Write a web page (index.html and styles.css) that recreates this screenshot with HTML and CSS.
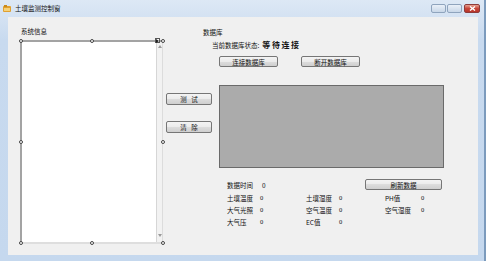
FILE: index.html
```html
<!DOCTYPE html>
<html lang="zh-CN">

<head>
    <meta charset="UTF-8">
    <title>土壤监测控制窗</title>
    <link rel="stylesheet" href="styles.css">
</head>

<body>
    <div class="window">
        <div class="titlebar">
            <svg class="app-icon" width="8" height="7" viewBox="0 0 8 7">
                <rect x="0" y="1" width="8" height="6" rx="1" fill="#e0a030"/>
                <rect x="1" y="0" width="3" height="2" fill="#c98a1c"/>
                <rect x="1" y="3" width="6" height="3" fill="#f5d27a"/>
            </svg>
            <span class="title">土壤监测控制窗</span>
            <div class="caption-buttons">
                <span class="cap-btn cap-min"></span>
                <span class="cap-btn cap-max"></span>
                <span class="cap-btn cap-close">
                    <svg width="7" height="5" viewBox="0 0 7 5"><path d="M1 0.5 L6 4.5 M6 0.5 L1 4.5" stroke="#fff" stroke-width="1.4"/></svg>
                </span>
            </div>
        </div>
        <div class="frame-body">
            <div class="client">
                <!-- 系统信息 -->
                <div class="col-info">
                    <div class="group-label">系统信息</div>
                    <div class="textbox">
                        <div class="scrollbar">
                            <svg width="4" height="3" viewBox="0 0 4 3"><path d="M0 3 L2 0 L4 3Z" fill="#9a9a9a"/></svg>
                            <svg width="4" height="3" viewBox="0 0 4 3"><path d="M0 0 L2 3 L4 0Z" fill="#9a9a9a"/></svg>
                        </div>
                        <span class="smart-tag">
                            <svg width="3" height="4" viewBox="0 0 3 4"><path d="M0 0 L3 2 L0 4Z" fill="#222"/></svg>
                        </span>
                        <span class="handle h-tl"></span>
                        <span class="handle h-tc"></span>
                        <span class="handle h-tr"></span>
                        <span class="handle h-ml"></span>
                        <span class="handle h-mr"></span>
                        <span class="handle h-bl"></span>
                        <span class="handle h-bc"></span>
                        <span class="handle h-br"></span>
                    </div>
                </div>
                <!-- 数据库 -->
                <div class="col-right">
                    <div class="group-label db-label">数据库</div>
                    <div class="status-row">
                        <span>当前数据库状态:</span>
                        <span class="status">等待连接</span>
                    </div>
                    <div class="db-buttons">
                        <button class="btn btn-db">连接数据库</button>
                        <button class="btn btn-db">断开数据库</button>
                    </div>
                    <div class="work-row">
                        <div class="actions">
                            <button class="btn btn-side">测&nbsp;&nbsp;&nbsp;试</button>
                            <button class="btn btn-side">清&nbsp;&nbsp;&nbsp;除</button>
                        </div>
                        <div class="db-main">
                            <div class="panel"></div>
                            <div class="readings">
                                <div class="time-row">
                                    <span class="time-label">数据时间</span>
                                    <span class="time-value">0</span>
                                    <button class="btn btn-refresh">刷新数据</button>
                                </div>
                                <div class="grid">
                                    <span>土壤温度</span><span class="val">0</span>
                                    <span>土壤湿度</span><span class="val">0</span>
                                    <span>PH值</span><span class="val">0</span>

                                    <span>大气光照</span><span class="val">0</span>
                                    <span>空气温度</span><span class="val">0</span>
                                    <span>空气湿度</span><span class="val">0</span>

                                    <span>大气压</span><span class="val">0</span>
                                    <span>EC值</span><span class="val">0</span>
                                    <span></span><span></span>
                                </div>
                            </div>
                        </div>
                    </div>
                </div>
            </div>
        </div>
    </div>
</body>

</html>
```

FILE: styles.css
```css
* {
    box-sizing: border-box;
}

body {
    margin: 0;
    background-color: #fff;
    font-family: "Noto Sans CJK SC", "DejaVu Sans", sans-serif;
    color: #111;
}

.window {
    width: 486px;
    height: 261px;
    display: flex;
    flex-direction: column;
    background: linear-gradient(#dde8f5, #c8daef 40px, #c5d8ee);
    border-right: 2px solid #7c9bbd;
}

.titlebar {
    height: 17px;
    display: flex;
    align-items: flex-start;
    padding: 5px 4px 0 3px;
}

.app-icon {
    display: block;
}

.title {
    font-size: 6.5px;
    line-height: 7px;
    margin-left: 4px;
    color: #111;
}

.caption-buttons {
    margin-left: auto;
    margin-top: -1px;
    display: flex;
    gap: 1px;
}

.cap-btn {
    width: 15px;
    height: 9px;
    border: 1px solid #8fa4bd;
    border-radius: 2px;
    background: linear-gradient(#e9f0f8, #c9d7e8);
    display: flex;
    align-items: center;
    justify-content: center;
}

.cap-close {
    width: 16px;
    margin-left: 1px;
    border-color: #8c3b3b;
    background: linear-gradient(#e8a494, #c8463a 50%, #b8352a);
}

.frame-body {
    flex: 1;
    padding: 0 6px 6px 8px;
}

.client {
    height: 238px;
    background-color: #f0f0f0;
    display: flex;
    align-items: flex-start;
    font-size: 6.5px;
    line-height: 8px;
}

.group-label {
    font-size: 6.5px;
    line-height: 8px;
}

/* left column */

.col-info {
    margin-left: 12px;
    width: 143px;
    padding-top: 10px;
}

.col-info .group-label {
    margin-left: 1px;
}

.textbox {
    position: relative;
    margin-top: 5px;
    height: 204px;
    background-color: #fff;
    border-top: 2px solid #a3a3a3;
    border-left: 2px solid #a3a3a3;
    border-right: 1px solid #dcdcdc;
    border-bottom: 2px solid #dedede;
    display: flex;
    justify-content: flex-end;
}

.scrollbar {
    width: 6px;
    background-color: #f2f2f2;
    border-left: 1px solid #d6d6d6;
    display: flex;
    flex-direction: column;
    justify-content: space-between;
    align-items: center;
    padding: 3px 0 5px;
}

.scrollbar svg {
    display: block;
}

.smart-tag {
    position: absolute;
    top: -4px;
    right: 2px;
    width: 5px;
    height: 5px;
    background-color: #fff;
    border: 1px solid #555;
    display: flex;
    align-items: center;
    justify-content: center;
}

.handle {
    position: absolute;
    width: 4px;
    height: 4px;
    border: 1px solid #444;
    border-radius: 50%;
    background-color: #fff;
    transform: translate(-50%, -50%);
}

.h-tl { left: -1px; top: -1px; }
.h-tc { left: 50%; top: -1px; }
.h-tr { left: calc(100% + 1px); top: -1px; }
.h-ml { left: -1px; top: 50%; }
.h-mr { left: calc(100% + 1px); top: 50%; }
.h-bl { left: -1px; top: calc(100% + 1px); }
.h-bc { left: 50%; top: calc(100% + 1px); }
.h-br { left: calc(100% + 1px); top: calc(100% + 1px); }

/* right side */

.col-right {
    margin-left: 3px;
    padding-top: 11px;
}

.db-label {
    margin-left: 37px;
}

.status-row {
    margin-top: 3px;
    padding-left: 46px;
    display: flex;
    align-items: center;
    height: 11px;
}

.status {
    margin-left: 3px;
    font-size: 8px;
    font-weight: bold;
    letter-spacing: 1.6px;
    line-height: 11px;
}

.btn {
    display: block;
    padding: 0;
    font-family: inherit;
    font-size: 6.5px;
    line-height: 8px;
    color: #111;
    border: 1px solid #767676;
    border-radius: 2px;
    background: linear-gradient(#f4f4f4, #ebebeb 50%, #dddddd 50%, #cfcfcf);
}

.db-buttons {
    margin-top: 6px;
    padding-left: 53px;
    display: flex;
    gap: 23px;
}

.btn-db {
    width: 59px;
    height: 11px;
}

.work-row {
    margin-top: 18px;
    display: flex;
    align-items: flex-start;
}

.actions {
    width: 46px;
    padding-top: 8px;
}

.btn-side {
    width: 46px;
    height: 12px;
}

.btn-side + .btn-side {
    margin-top: 16px;
}

.db-main {
    margin-left: 7px;
}

.panel {
    width: 225px;
    height: 83px;
    background-color: #ababab;
    border: 1px solid #6a6a6a;
}

.readings {
    margin-top: 11px;
    padding-left: 8px;
}

.time-row {
    display: flex;
    align-items: center;
    height: 11px;
}

.time-label {
    width: 35px;
}

.time-value {
    width: 103px;
}

.btn-refresh {
    width: 77px;
    height: 11px;
}

.grid {
    margin-top: 2px;
    display: grid;
    grid-template-columns: 33px 46px 33px 46px 36px 20px;
    line-height: 12px;
}

.val {
    font-family: "Liberation Serif", serif;
}
```
